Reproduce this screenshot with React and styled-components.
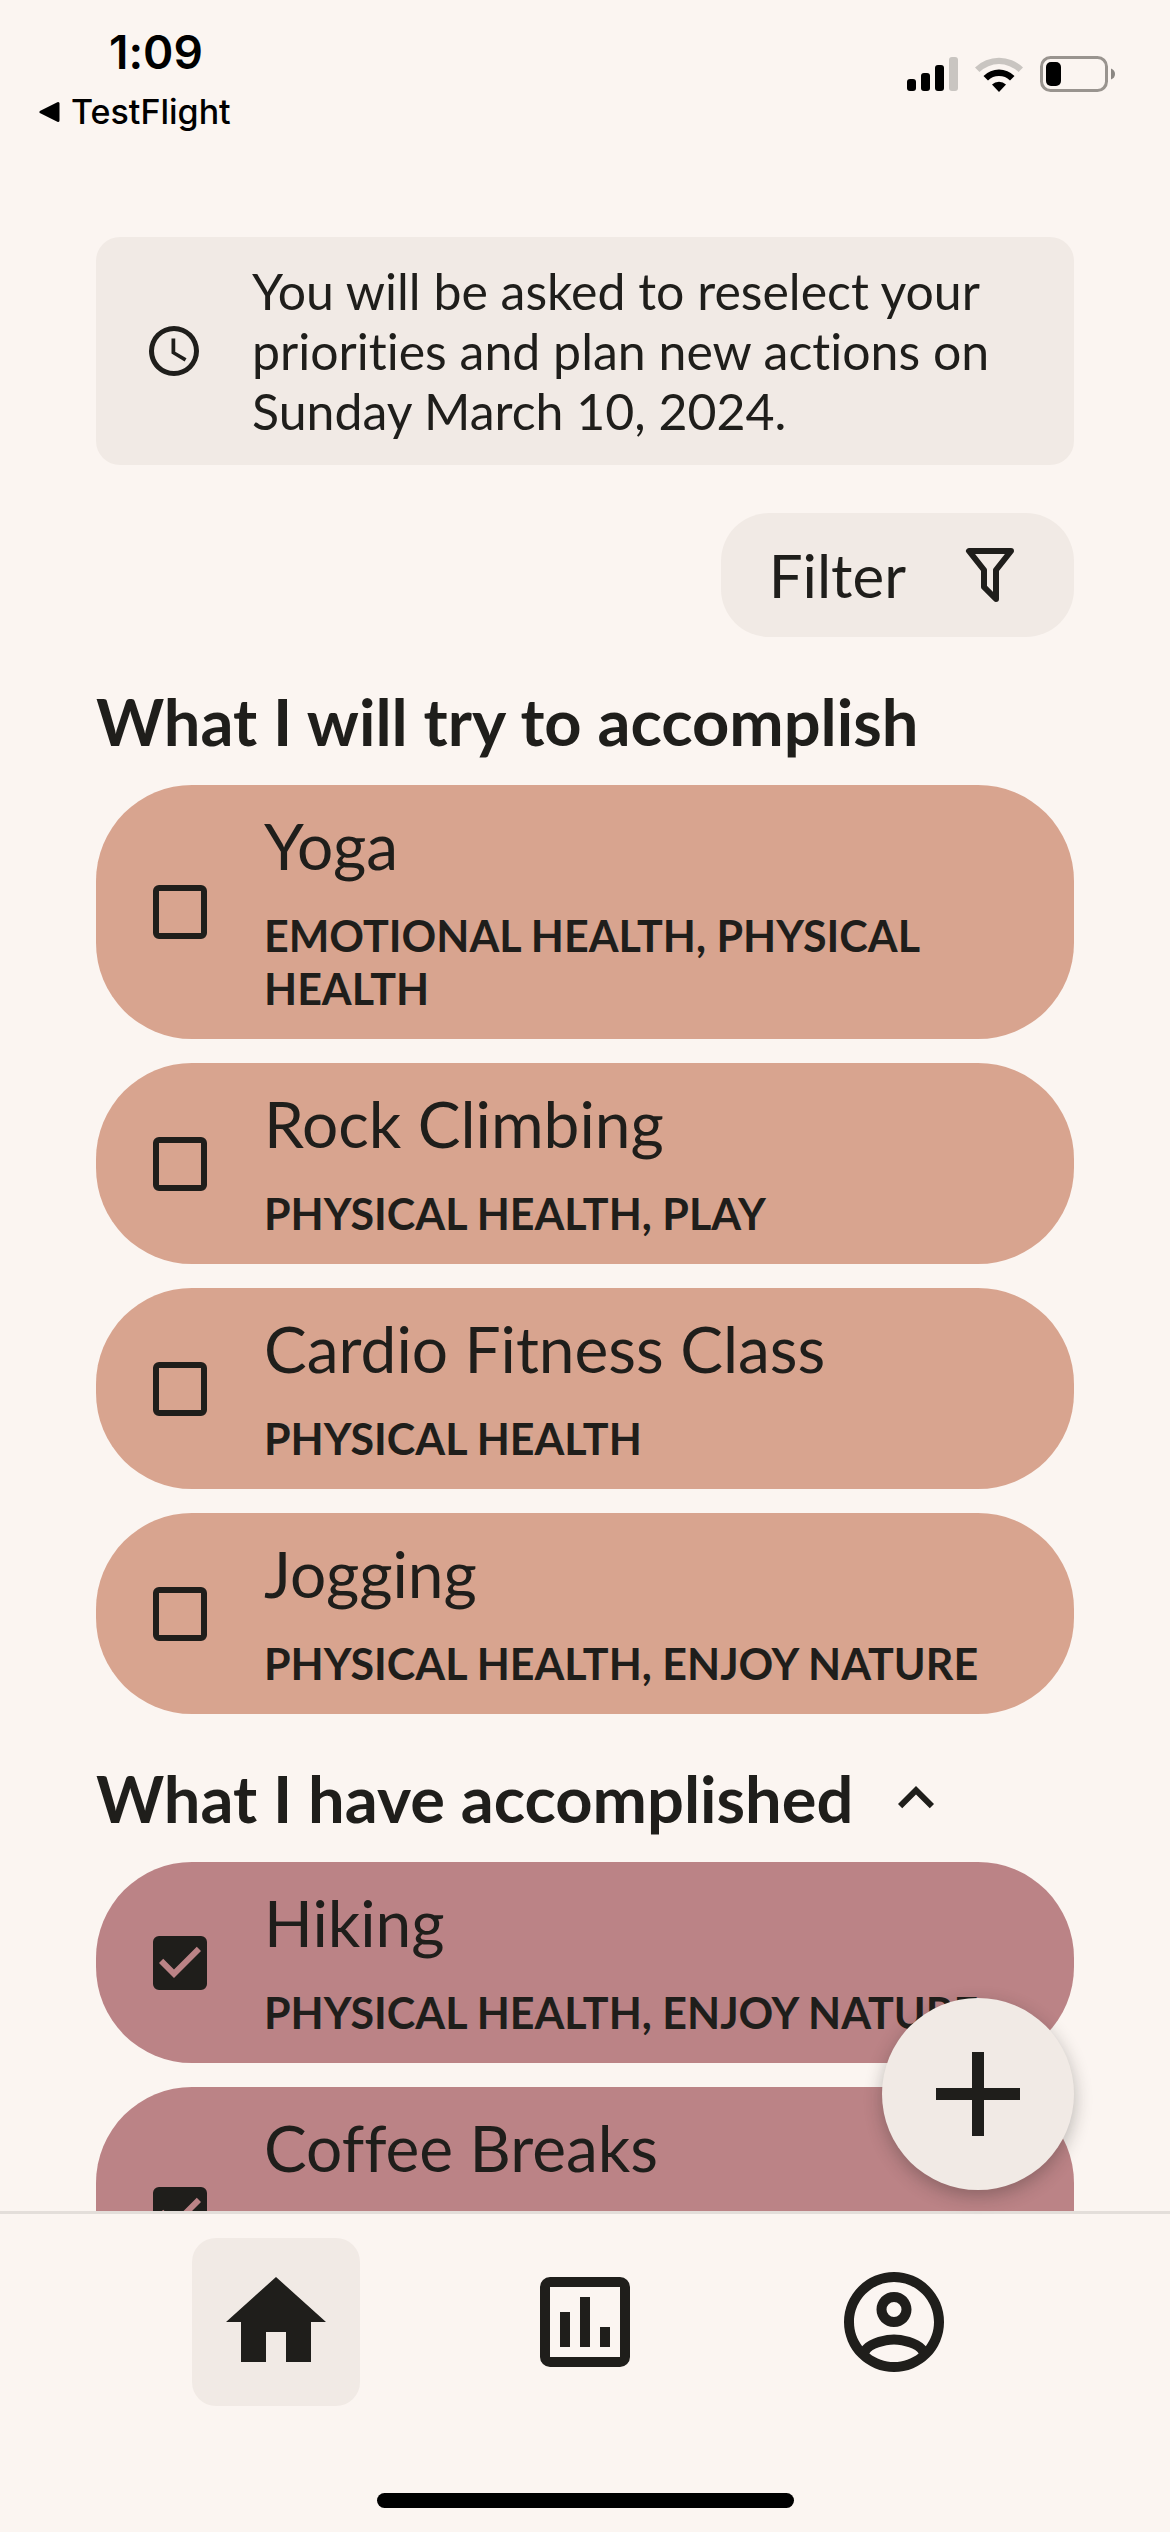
import React, { useState } from "react";
import styled, { createGlobalStyle, ThemeProvider } from "styled-components";

const theme = {
  background: "#fbf5f1",
  surface: "#f1eae5",
  line: "#e3deda",
  ink: "#1f1e1b",
  planned: "#d8a48f",
  done: "#bb8386",
  side: "96px",
};

const GlobalStyle = createGlobalStyle`
  * { box-sizing: border-box; }
  body {
    margin: 0;
    background: ${theme.background};
    color: ${theme.ink};
    font-family: Lato, "Open Sans", sans-serif;
    font-variant-ligatures: none;
  }
  button, input { font: inherit; color: inherit; }
  h2, p { margin: 0; }
`;

const Screen = styled.div`
  display: flex;
  flex-direction: column;
  height: 100vh;
`;

const StatusBar = styled.header`
  flex: none;
  display: flex;
  justify-content: space-between;
  align-items: flex-start;
  padding: 28px 54px 0 39px;
  height: 189px;
  color: #000;
  font-family: Inter, sans-serif;
`;

const StatusLeft = styled.div`
  display: flex;
  flex-direction: column;
`;

const Clock = styled.time`
  padding-left: 70px;
  font-size: 46px;
  font-weight: 600;
  line-height: 48px;
`;

const BackLink = styled.a`
  display: flex;
  align-items: center;
  gap: 10px;
  margin-top: 16px;
  color: inherit;
  font-size: 34px;
  font-weight: 500;
  line-height: 40px;
  text-decoration: none;
`;

const StatusIcons = styled.div`
  display: flex;
  align-items: center;
  gap: 17px;
  padding-top: 28px;
`;

const Stage = styled.div`
  position: relative;
  flex: 1;
  min-height: 0;
`;

const Scroll = styled.main`
  height: 100%;
  overflow-y: auto;
  scrollbar-width: none;
  display: flex;
  flex-direction: column;
  gap: 48px;
  padding: 48px ${(p) => p.theme.side} 0;
  & > * { flex: none; }
`;

const Notice = styled.div`
  display: flex;
  align-items: center;
  gap: 48px;
  padding: 24px 48px;
  border-radius: 24px;
  background: ${(p) => p.theme.surface};
  font-size: 50px;
  line-height: 60px;
`;

const FilterButton = styled.button`
  align-self: flex-end;
  display: flex;
  align-items: center;
  gap: 48px;
  padding: 24px 48px;
  border: 0;
  border-radius: 48px;
  background: ${(p) => p.theme.surface};
  font-size: 60px;
  line-height: 76px;
`;

const Section = styled.section`
  display: flex;
  flex-direction: column;
  gap: 24px;
`;

const SectionHeader = styled.div`
  display: flex;
  align-items: center;
  gap: 27px;
  padding-bottom: 4px;
`;

const SectionTitle = styled.h2`
  font-size: 65px;
  font-weight: 700;
  line-height: 72px;
`;

const IconButton = styled.button`
  display: flex;
  padding: 0;
  border: 0;
  background: none;
`;

const Card = styled.label`
  display: flex;
  align-items: center;
  gap: 48px;
  padding: 24px 48px;
  border-radius: 96px;
  background: ${(p) => (p.$done ? p.theme.done : p.theme.planned)};
`;

const Check = styled.span`
  flex: none;
  display: grid;
  place-items: center;
  width: 72px;
  height: 72px;
  & > * { grid-area: 1 / 1; }
  svg { pointer-events: none; }
`;

const CheckInput = styled.input`
  appearance: none;
  width: 54px;
  height: 54px;
  margin: 0;
  border: 6px solid ${(p) => p.theme.ink};
  border-radius: 6px;
  &:checked { background: ${(p) => p.theme.ink}; }
`;

const CardText = styled.span`
  display: flex;
  flex-direction: column;
  gap: 26px;
  min-width: 0;
`;

const CardTitle = styled.span`
  font-size: 64px;
  line-height: 74px;
`;

const CardTags = styled.span`
  min-height: ${(p) => p.$rows * 53}px;
  font-size: 43px;
  font-weight: 700;
  line-height: 53px;
  text-transform: uppercase;
`;

const AddButton = styled.button`
  position: absolute;
  right: ${(p) => p.theme.side};
  bottom: 21px;
  display: grid;
  place-items: center;
  width: 192px;
  height: 192px;
  padding: 0;
  border: 0;
  border-radius: 50%;
  background: ${(p) => p.theme.surface};
  box-shadow: 0 6px 18px rgba(31, 30, 27, 0.3);
`;

const TabBar = styled.nav`
  flex: none;
  display: flex;
  justify-content: space-between;
  padding: 24px 192px 0;
  border-top: 3px solid ${(p) => p.theme.line};
`;

const Tab = styled.a`
  display: grid;
  place-items: center;
  width: 168px;
  height: 168px;
  border-radius: 24px;
  color: inherit;
  background: ${(p) => (p.$active ? p.theme.surface : "transparent")};
`;

const HomeArea = styled.footer`
  flex: none;
  display: flex;
  justify-content: center;
  padding: 87px 0 24px;
`;

const HomeIndicator = styled.div`
  width: 417px;
  height: 15px;
  border-radius: 8px;
  background: #000;
`;

const icons = {
  clock:
    "M12,20A8,8 0 0,0 20,12A8,8 0 0,0 12,4A8,8 0 0,0 4,12A8,8 0 0,0 12,20M12,2A10,10 0 0,1 22,12A10,10 0 0,1 12,22C6.47,22 2,17.5 2,12A10,10 0 0,1 12,2M12.5,7V12.25L17,14.92L16.25,16.15L11,13V7H12.5Z",
  chevronUp: "M7.41,15.41L12,10.83L16.59,15.41L18,14L12,8L6,14L7.41,15.41Z",
  check: "M10,17L5,12L6.41,10.58L10,14.17L17.59,6.58L19,8Z",
  plus: "M19,13H13V19H11V13H5V11H11V5H13V11H19V13Z",
  home: "M10,20V14H14V20H19V12H22L12,3L2,12H5V20H10Z",
  chart:
    "M19,3H5A2,2 0 0,0 3,5V19A2,2 0 0,0 5,21H19A2,2 0 0,0 21,19V5A2,2 0 0,0 19,3M19,19H5V5H19V19M9,17H7V10H9V17M13,17H11V7H13V17M17,17H15V13H17V17Z",
  account:
    "M12,2A10,10 0 0,0 2,12A10,10 0 0,0 12,22A10,10 0 0,0 22,12A10,10 0 0,0 12,2M7.07,18.28C7.5,17.38 10.12,16.5 12,16.5C13.88,16.5 16.5,17.38 16.93,18.28C15.57,19.36 13.86,20 12,20C10.14,20 8.43,19.36 7.07,18.28M18.36,16.83C16.93,15.09 13.46,14.5 12,14.5C10.54,14.5 7.07,15.09 5.64,16.83C4.62,15.5 4,13.82 4,12C4,7.59 7.59,4 12,4C16.41,4 20,7.59 20,12C20,13.82 19.38,15.5 18.36,16.83M12,6C10.06,6 8.5,7.56 8.5,9.5C8.5,11.44 10.06,13 12,13C13.94,13 15.5,11.44 15.5,9.5C15.5,7.56 13.94,6 12,6M12,11A1.5,1.5 0 0,1 10.5,9.5A1.5,1.5 0 0,1 12,8A1.5,1.5 0 0,1 13.5,9.5A1.5,1.5 0 0,1 12,11Z",
};

const Glyph = styled.svg.attrs({ viewBox: "0 0 24 24", "aria-hidden": true })`
  flex: none;
  display: block;
  width: ${(p) => p.$size}px;
  height: ${(p) => p.$size}px;
  fill: ${(p) => p.$color || "currentColor"};
`;

function Icon({ name, size, color }) {
  return (
    <Glyph $size={size} $color={color}>
      <path fillRule="evenodd" d={icons[name]} />
    </Glyph>
  );
}

function FilterIcon() {
  return (
    <svg width="72" height="72" viewBox="0 0 72 72" fill="none" stroke="currentColor" strokeWidth="6" strokeLinejoin="round" aria-hidden="true">
      <path d="M15 12H57L42 31V60L30 48V31Z" />
    </svg>
  );
}

function SignalIcon() {
  return (
    <svg width="51" height="34" viewBox="0 0 51 34" aria-hidden="true">
      <rect x="0" y="22" width="9" height="12" rx="3" />
      <rect x="14" y="16" width="9" height="18" rx="3" />
      <rect x="28" y="8" width="9" height="26" rx="3" />
      <rect x="42" y="0" width="9" height="34" rx="3" fill="#c9c5c1" />
    </svg>
  );
}

function WifiIcon() {
  return (
    <svg width="48" height="36" viewBox="0 0 48 36" aria-hidden="true">
      <path d="M0 11.5A34.5 34.5 0 0 1 48 11.5L43.5 16A28 28 0 0 0 4.5 16Z" fill="#c9c5c1" />
      <path d="M8.5 20A22 22 0 0 1 39.5 20L35 24.5A15.8 15.8 0 0 0 13 24.5Z" />
      <path d="M17 28.5A10 10 0 0 1 31 28.5L24 36Z" />
    </svg>
  );
}

function BatteryIcon() {
  return (
    <svg width="76" height="36" viewBox="0 0 76 36" aria-hidden="true">
      <rect x="1.5" y="1.5" width="65" height="33" rx="9" fill="none" stroke="#99948f" strokeWidth="3" />
      <rect x="6" y="6" width="15" height="24" rx="5" />
      <path d="M71 12.5Q75 14 75 18T71 23.5Z" fill="#8b8783" />
    </svg>
  );
}

function ActionCard({ title, tags, rows = 1, done }) {
  const [checked, setChecked] = useState(done);
  return (
    <Card $done={done}>
      <Check>
        <CheckInput type="checkbox" checked={checked} onChange={() => setChecked(!checked)} />
        {checked && <Icon name="check" size={72} color={theme.done} />}
      </Check>
      <CardText>
        <CardTitle>{title}</CardTitle>
        <CardTags $rows={rows}>{tags.join(", ")}</CardTags>
      </CardText>
    </Card>
  );
}

const planned = [
  { title: "Yoga", tags: ["Emotional Health", "Physical Health"] },
  { title: "Rock Climbing", tags: ["Physical Health", "Play"] },
  { title: "Cardio Fitness Class", tags: ["Physical Health"] },
  { title: "Jogging", tags: ["Physical Health", "Enjoy Nature"] },
];

const accomplished = [
  { title: "Hiking", tags: ["Physical Health", "Enjoy Nature"] },
  { title: "Coffee Breaks", tags: [], rows: 2 },
];

export default function App() {
  const [open, setOpen] = useState(true);
  return (
    <ThemeProvider theme={theme}>
      <GlobalStyle />
      <Screen>
        <StatusBar>
          <StatusLeft>
            <Clock>1:09</Clock>
            <BackLink href="#testflight">
              <svg width="22" height="22" viewBox="0 0 22 22" aria-hidden="true">
                <path d="M2 11L19 2.5V19.5Z" fill="currentColor" stroke="currentColor" strokeWidth="3" strokeLinejoin="round" />
              </svg>
              TestFlight
            </BackLink>
          </StatusLeft>
          <StatusIcons>
            <SignalIcon />
            <WifiIcon />
            <BatteryIcon />
          </StatusIcons>
        </StatusBar>

        <Stage>
          <Scroll>
            <Notice>
              <Icon name="clock" size={60} />
              <p>You will be asked to reselect your priorities and plan new actions on Sunday March 10, 2024.</p>
            </Notice>

            <FilterButton type="button">
              Filter
              <FilterIcon />
            </FilterButton>

            <Section>
              <SectionHeader>
                <SectionTitle>What I will try to accomplish</SectionTitle>
              </SectionHeader>
              {planned.map((item) => (
                <ActionCard key={item.title} {...item} done={false} />
              ))}
            </Section>

            <Section>
              <SectionHeader>
                <SectionTitle>What I have accomplished</SectionTitle>
                <IconButton type="button" aria-label="Toggle accomplished actions" aria-expanded={open} onClick={() => setOpen(!open)}>
                  <Icon name="chevronUp" size={72} />
                </IconButton>
              </SectionHeader>
              {open && accomplished.map((item) => <ActionCard key={item.title} {...item} done />)}
            </Section>
          </Scroll>
          <AddButton type="button" aria-label="Add action">
            <Icon name="plus" size={144} />
          </AddButton>
        </Stage>

        <TabBar>
          <Tab href="#home" aria-label="Home" aria-current="page" $active>
            <Icon name="home" size={120} />
          </Tab>
          <Tab href="#stats" aria-label="Statistics">
            <Icon name="chart" size={120} />
          </Tab>
          <Tab href="#account" aria-label="Account">
            <Icon name="account" size={120} />
          </Tab>
        </TabBar>
        <HomeArea>
          <HomeIndicator />
        </HomeArea>
      </Screen>
    </ThemeProvider>
  );
}
